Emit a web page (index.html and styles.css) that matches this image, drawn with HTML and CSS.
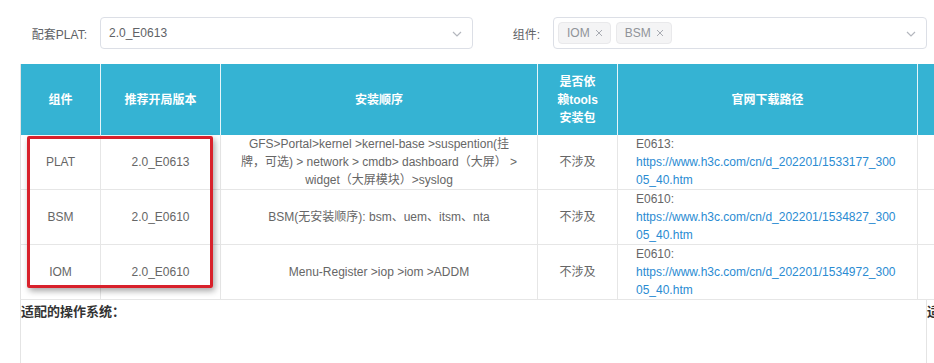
FILE: index.html
```html
<!DOCTYPE html>
<html lang="zh-CN">
<head>
    <link rel="stylesheet" href="styles.css">
    <meta charset="UTF-8">
    <title>组件版本对照</title>
</head>
<body>
<div class="filters">
    <div class="filter-item">
        <label class="filter-label">配套PLAT:</label>
        <div class="select">
            <span class="select-value">2.0_E0613</span>
            <svg class="select-arrow" width="10" height="6" viewBox="0 0 10 6"><polyline points="1,1 5,5 9,1" fill="none" stroke="#b4b7be" stroke-width="1.2"/></svg>
        </div>
    </div>
    <div class="filter-item">
        <label class="filter-label">组件:</label>
        <div class="select select-multi">
            <span class="tag">IOM<svg class="tag-close" width="8" height="8" viewBox="0 0 8 8"><path d="M1 1L7 7M7 1L1 7" stroke="#a8abb2" stroke-width="1"/></svg></span>
            <span class="tag">BSM<svg class="tag-close" width="8" height="8" viewBox="0 0 8 8"><path d="M1 1L7 7M7 1L1 7" stroke="#a8abb2" stroke-width="1"/></svg></span>
            <svg class="select-arrow" width="10" height="6" viewBox="0 0 10 6"><polyline points="1,1 5,5 9,1" fill="none" stroke="#b4b7be" stroke-width="1.2"/></svg>
        </div>
    </div>
</div>

<div class="board">
    <table class="version-table">
        <colgroup>
            <col style="width:80px">
            <col style="width:120px">
            <col style="width:317px">
            <col style="width:80px">
            <col style="width:300px">
            <col style="width:200px">
        </colgroup>
        <thead>
            <tr>
                <th>组件</th>
                <th>推荐开局版本</th>
                <th>安装顺序</th>
                <th>是否依赖tools安装包</th>
                <th>官网下载路径</th>
                <th></th>
            </tr>
        </thead>
        <tbody>
            <tr>
                <td>PLAT</td>
                <td>2.0_E0613</td>
                <td class="order">GFS&gt;Portal&gt;kernel &gt;kernel-base &gt;suspention(挂牌，可选) &gt; network &gt; cmdb&gt; dashboard（大屏） &gt; widget（大屏模块）&gt;syslog</td>
                <td>不涉及</td>
                <td class="link-cell">E0613:<br><a href="#">https://www.h3c.com/cn/d_202201/1533177_30005_40.htm</a></td>
                <td></td>
            </tr>
            <tr>
                <td>BSM</td>
                <td>2.0_E0610</td>
                <td class="order">BSM(无安装顺序): bsm、uem、itsm、nta</td>
                <td>不涉及</td>
                <td class="link-cell">E0610:<br><a href="#">https://www.h3c.com/cn/d_202201/1534827_30005_40.htm</a></td>
                <td></td>
            </tr>
            <tr>
                <td>IOM</td>
                <td>2.0_E0610</td>
                <td class="order">Menu-Register &gt;iop &gt;iom &gt;ADDM</td>
                <td>不涉及</td>
                <td class="link-cell">E0610:<br><a href="#">https://www.h3c.com/cn/d_202201/1534972_30005_40.htm</a></td>
                <td></td>
            </tr>
        </tbody>
    </table>
    <div class="mark"></div>
    <div class="os-row">
        <div class="os-panel">适配的操作系统：</div>
        <div class="os-panel">适配的操作系统：</div>
    </div>
</div>
</body>
</html>
```

FILE: styles.css
```css
body{
    margin: 0;
    overflow: hidden;
    font-family: "Liberation Sans", Arial, "Noto Sans CJK SC", sans-serif;
    font-size: 12px;
    color: #606266;
    background: #fff;
}
.filters{
    display: flex;
    padding: 17px 0 0 20px;
}
.filter-item{
    display: flex;
    align-items: center;
}
.filter-label{
    width: 80px;
    box-sizing: border-box;
    padding-right: 13px;
    text-align: right;
    color: #606266;
}
.select{
    position: relative;
    display: flex;
    align-items: center;
    box-sizing: border-box;
    width: 373px;
    height: 32px;
    padding: 0 8px;
    border: 1px solid #dcdfe6;
    border-radius: 4px;
}
.select-multi{
    width: 374px;
    padding-left: 4px;
}
.select-value{
    color: #606266;
}
.select-arrow{
    position: absolute;
    right: 10px;
    top: 13px;
}
.tag{
    display: inline-flex;
    align-items: center;
    height: 22px;
    box-sizing: border-box;
    padding: 0 7px 0 8px;
    margin-right: 5px;
    background: #f4f4f5;
    border: 1px solid #e9e9eb;
    border-radius: 4px;
    color: #909399;
}
.tag-close{
    margin-left: 5px;
}
.board{
    position: relative;
    margin: 15px 0 0 20px;
}
.version-table{
    width: 1097px;
    table-layout: fixed;
    border-collapse: collapse;
    border-left: 1px solid #e4e4e4;
}
.version-table th{
    background: #35b3d3;
    color: #fff;
    font-weight: bold;
    line-height: 18px;
    padding: 9px 18px 8px;
    border-right: 1px solid #e6f6fa;
}
.version-table td{
    height: 54px;
    padding: 0 6px;
    line-height: 18px;
    text-align: center;
    color: #666;
    border-right: 1px solid #e6e6e6;
    border-bottom: 1px solid #e6e6e6;
}
.version-table td.order{
    padding: 0 18px;
}
.version-table td.link-cell{
    text-align: left;
    padding: 0 20px 0 18px;
    word-break: break-all;
}
.link-cell a{
    color: #2a8bd2;
    text-decoration: none;
}
.mark{
    position: absolute;
    left: 7px;
    top: 72px;
    width: 186px;
    height: 152px;
    box-sizing: border-box;
    border: 3px solid #d8212b;
    border-radius: 2px;
    box-shadow: 2px 3px 6px rgba(0,0,0,.35);
}
.os-row{
    display: flex;
}
.os-panel{
    flex-shrink: 0;
    width: 906px;
    height: 70px;
    box-sizing: border-box;
    padding-top: 3px;
    border-left: 1px solid #e4e4e4;
    font-size: 13px;
    font-weight: bold;
    line-height: 18px;
    color: #333;
}
```
